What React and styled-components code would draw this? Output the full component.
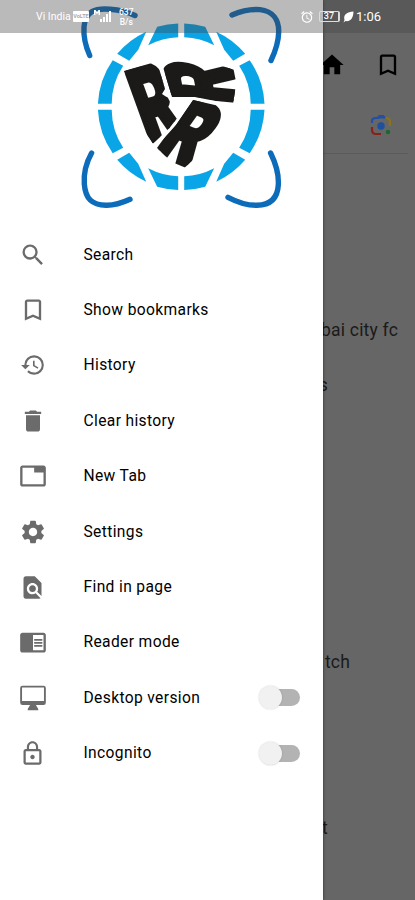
import styled, { createGlobalStyle } from "styled-components";
import { useState } from "react";
import {
    MdSearch,
    MdBookmarkBorder,
    MdHistory,
    MdDelete,
    MdTab,
    MdSettings,
    MdFindInPage,
    MdChromeReaderMode,
    MdLockOutline,
    MdHome,
    MdAlarm,
} from "react-icons/md";

const DesktopIcon = ({ size, color }) => (
    <svg width={size} height={size} viewBox="0 0 24 24" fill={color}>
        <path
            fillRule="evenodd"
            d="M3 1.500H21A2 2 0 0 1 23 3.500V16A2 2 0 0 1 21 18H14.500L16.500 21.500V22.500H7.500V21.500L9.500 18H3A2 2 0 0 1 1 16V3.500A2 2 0 0 1 3 1.500ZM2.600 3.100V14.500H21.400V3.100Z"
        />
    </svg>
);

const menuItems = [
    { label: "Search", icon: MdSearch },
    { label: "Show bookmarks", icon: MdBookmarkBorder },
    { label: "History", icon: MdHistory, iconSize: 26 },
    { label: "Clear history", icon: MdDelete },
    { label: "New Tab", icon: MdTab },
    { label: "Settings", icon: MdSettings },
    { label: "Find in page", icon: MdFindInPage, iconSize: 27 },
    { label: "Reader mode", icon: MdChromeReaderMode },
    { label: "Desktop version", icon: DesktopIcon, toggle: true },
    { label: "Incognito", icon: MdLockOutline, iconSize: 27, toggle: true },
];

// end = space left between the line and the right screen edge
const suggestions = [
    { text: "bai city fc", end: 17 },
    { text: "s", end: 87 },
    { text: "" },
    { text: "" },
    { text: "" },
    { text: "" },
    { text: "tch", end: 65 },
    { text: "" },
    { text: "" },
    { text: "t", end: 87 },
];

const RingQuarter = ({ flip }) => (
    <g transform={`scale(${flip})`}>
        <path d="M-83.3-3A83.3 83.3 0 0 1-68.5-46.5L-58-41A70 70 0 0 0-69.5-3Z" />
        <path d="M-64-53A83.3 83.3 0 0 1-35-75L-43-57L-52-46Z" />
        <path d="M-24-80A83.3 83.3 0 0 1-3-83.3V-69.5A70 70 0 0 0-33-61.5Z" />
    </g>
);

const Logo = () => (
    <LogoSvg viewBox="0 0 323 226">
        {/* the three initials are trimmed to the parts of a shield */}
        <clipPath id="shield-left">
            <polygon points="124,71 157,61.500 165,89 162,94 168,98 178,117 169.500,128 153,143.500 138,122 128,95" />
        </clipPath>
        <clipPath id="shield-top">
            <polygon points="161,60.500 192,60 198,66 206,61 238,71 233,104.500 195,97 172,97" />
        </clipPath>
        <clipPath id="shield-bottom">
            <polygon points="193,100 228,108 217,134 204,142 205,149 181,171 156,147 176,125" />
        </clipPath>
        <g fill="none" stroke="#0c6cba" strokeWidth="5.4" strokeLinecap="round">
            <path d="M89.7 55.5C85 45 83.4 36 84 27C85.5 11 95 8 110 9.2C120 10 128 12 135 15.5" />
            <path d="M232 15C242 10.5 252 9 260 9.6C273 11 279 20 278.7 32C278.5 43 275 52 271 60.5" />
            <path d="M91.6 153C86 163 83.5 173 84.3 184C85.5 199 92 205 106 205.3C115 205.5 122 203 130 199.3" />
            <path d="M270.6 153C275.5 163 279 174 278.3 185C277.5 199 270 205 257 205.3C247 205.5 237 202 228 197.3" />
        </g>
        <g transform="translate(181.2 106.7)" fill="#0aa5e7">
            <RingQuarter flip="1 1" />
            <RingQuarter flip="-1 1" />
            <RingQuarter flip="1 -1" />
            <RingQuarter flip="-1 -1" />
        </g>
        <Monogram>
            <g clipPath="url(#shield-left)">
                <text transform="matrix(5.8 -1.6 3.7 10.2 122.500 71.500)" y="7.1">R</text>
            </g>
            <g clipPath="url(#shield-top)">
                <text transform="matrix(-1.2 -6 9.6 .9 169.500 98)" y="7.1">R</text>
            </g>
            <g clipPath="url(#shield-bottom)">
                <text transform="matrix(5.7 2.3 -5.4 7.6 191 97.500)" y="7.1">R</text>
            </g>
        </Monogram>
    </LogoSvg>
);

const LensIcon = () => (
    <svg width="22" height="22" viewBox="0 0 22 22" fill="none" strokeWidth="2.2">
        <path d="M2 9V7Q2 4 6 4H8L9.500 2H13L15 4" stroke="#2350a0" />
        <path d="M6 4.500L9 1.500H13.500L16 4.500Z" fill="#2350a0" />
        <path d="M15.500 4H16Q20 4 20 8V12" stroke="#8f7215" />
        <path d="M2 13V16Q2 20 6 20H11" stroke="#8c2018" />
        <circle cx="11" cy="12" r="3.700" fill="#1f4f9e" />
        <circle cx="18" cy="18" r="2.200" fill="#176b2c" />
    </svg>
);

const StatusIcons = () => (
    <StatusRight>
        <MdAlarm size={14} />
        <Battery>37</Battery>
        <svg width="11" height="12" viewBox="0 0 11 12">
            <path d="M10.500.5C4 1 0 3.500 1.500 9L.5 11.500L2.500 10C8 11 10.500 6 10.500.5Z" fill="#fff" />
        </svg>
        <Clock>1:06</Clock>
    </StatusRight>
);

const StatusBar = () => (
    <StatusWrapper>
        <Carrier>Vi India</Carrier>
        <Volte>VoLTE</Volte>
        <svg width="20" height="15" viewBox="0 0 20 15" fill="#fff">
            <path d="M1 6V1H2.500L4 3L5.500 1H7V6H5.600V3.500L4 5L2.400 3.500V6Z" />
            <path d="M7 10H9V13H7ZM10 8H12V13H10ZM13 5H15V13H13ZM16 2H18V13H16Z" />
        </svg>
        <Speed>
            <span>637</span>
            <span>B/s</span>
        </Speed>
        <StatusIcons />
    </StatusWrapper>
);

const MenuRow = ({ item }) => {
    const [on, setOn] = useState(false);
    const Icon = item.icon;
    return (
        <Row>
            <IconSlot>
                <Icon size={item.iconSize || 28} color="#6b6b6b" />
            </IconSlot>
            <Label>{item.label}</Label>
            {item.toggle && (
                <Switch role="switch" aria-checked={on} aria-label={item.label} onClick={() => setOn(!on)}>
                    <Knob $on={on} />
                </Switch>
            )}
        </Row>
    );
};

const App = () => {
    return (
        <Screen>
            <GlobalStyle />
            <Toolbar>
                <MdHome size={28} />
                <MdBookmarkBorder size={28} />
            </Toolbar>
            <SearchBar>
                <LensIcon />
            </SearchBar>
            <Suggestions>
                {suggestions.map((item, i) => (
                    <Suggestion key={i} $end={item.end}>
                        {item.text}
                    </Suggestion>
                ))}
            </Suggestions>
            <Drawer>
                <Logo />
                {menuItems.map((item) => (
                    <MenuRow key={item.label} item={item} />
                ))}
            </Drawer>
            <StatusBar />
        </Screen>
    );
};

const GlobalStyle = createGlobalStyle`
    body {
        margin: 0;
        font-family: Roboto, "Liberation Sans", sans-serif;
    }
    * {
        box-sizing: border-box;
    }
`;

const Screen = styled.div`
    position: relative;
    width: 415px;
    height: 900px;
    overflow: hidden;
    background: #666;
    color: #1a1a1a;
`;

const Toolbar = styled.div`
    display: flex;
    justify-content: flex-end;
    gap: 28px;
    height: 97px;
    padding: 51px 13px 0 0;
    color: #000;
`;

const SearchBar = styled.div`
    display: flex;
    justify-content: flex-end;
    align-items: center;
    height: 57px;
    margin-right: 7px;
    padding-right: 16px;
    border-bottom: 1px solid #5b5b5b;
`;

const Suggestions = styled.div`
    padding-top: 148px;
`;

const Suggestion = styled.div`
    display: flex;
    justify-content: flex-end;
    align-items: center;
    height: 55.4px;
    padding-right: ${({ $end }) => $end || 0}px;
    font-size: 17.5px;
    letter-spacing: 0.2px;
`;

const Drawer = styled.nav`
    position: absolute;
    top: 0;
    left: 0;
    width: 323px;
    height: 100%;
    background: #fff;
    box-shadow: 0 0 3px rgba(0, 0, 0, 0.55);
`;

const LogoSvg = styled.svg`
    display: block;
    width: 323px;
    height: 226px;
    margin-bottom: 1px;
`;

const Monogram = styled.g`
    font-family: Roboto, "Liberation Sans", sans-serif;
    font-size: 10px;
    font-weight: 900;
    fill: #1b1a18;
    stroke: #1b1a18;
    stroke-width: 0.6px;
`;

const Row = styled.div`
    display: flex;
    align-items: center;
    height: 55.4px;
    padding: 0 23px 0 18.5px;
`;

const IconSlot = styled.span`
    display: flex;
    justify-content: center;
    width: 28px;
`;

const Label = styled.span`
    flex: 1;
    margin-left: 37px;
    font-size: 15.6px;
    font-weight: 400;
    letter-spacing: 0.36px;
    white-space: nowrap;
    color: #000;
`;

const Switch = styled.button`
    display: flex;
    align-items: center;
    width: 37px;
    height: 17px;
    padding: 0;
    border: 0;
    border-radius: 9px;
    background: #b3b3b3;
`;

const Knob = styled.span`
    flex: none;
    width: 23px;
    height: 23px;
    margin-left: ${({ $on }) => ($on ? "17px" : "-4px")};
    border-radius: 50%;
    background: #f1f1f1;
    box-shadow: 0 0 2px rgba(0, 0, 0, 0.2);
`;

const StatusWrapper = styled.header`
    position: absolute;
    top: 0;
    left: 0;
    display: flex;
    align-items: center;
    width: 100%;
    height: 33px;
    padding: 0 34px 0 36px;
    background: rgba(69, 69, 69, 0.37);
    color: #fff;
`;

const Carrier = styled.span`
    width: 37px;
    font-size: 10.5px;
    white-space: nowrap;
`;

const Volte = styled.span`
    width: 16px;
    height: 11px;
    margin-right: 4px;
    border-radius: 1px;
    background: #fff;
    color: #aaa;
    font-size: 5.5px;
    font-weight: 700;
    line-height: 11px;
    text-align: center;
`;

const Speed = styled.span`
    display: flex;
    flex-direction: column;
    align-items: center;
    margin-left: 6px;
    font-size: 8.5px;
    font-weight: 500;
    line-height: 10px;
`;

const StatusRight = styled.div`
    display: flex;
    align-items: center;
    margin-left: auto;
`;

const Battery = styled.span`
    width: 21px;
    height: 11px;
    margin: 0 3px 0 5px;
    border: 1px solid #ddd;
    border-right-width: 2px;
    border-radius: 2px;
    font-size: 9px;
    font-weight: 500;
    line-height: 9px;
    text-align: center;
`;

const Clock = styled.span`
    margin-left: 2px;
    font-size: 13px;
`;

export default App;
